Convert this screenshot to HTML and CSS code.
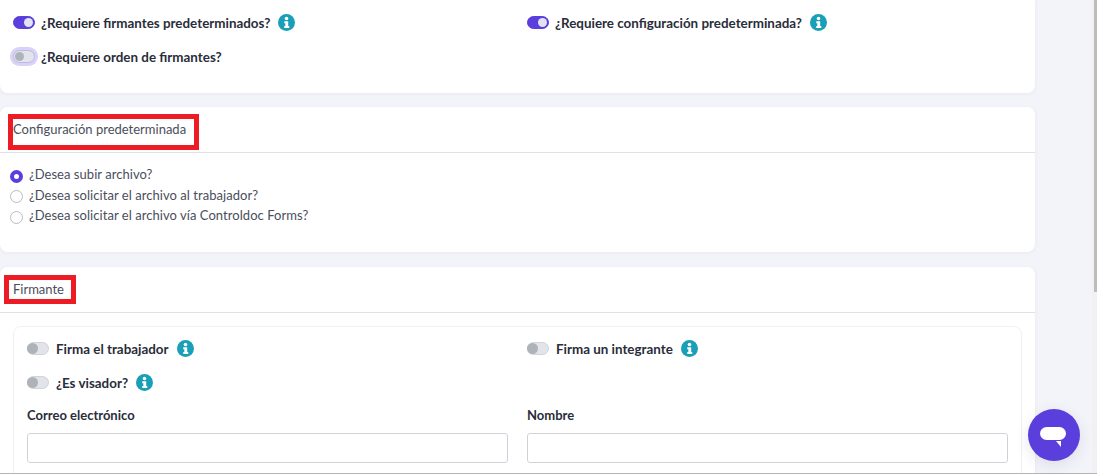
FILE: index.html
```html
<!DOCTYPE html>
<html lang="es">
<head>
<meta charset="utf-8">
<title>Configuración</title>
<link rel="stylesheet" href="styles.css">
</head>
<body>
<main class="page">
  <section class="card card-top">
    <div class="switch-grid">
      <div class="field"><span class="toggle on"></span><span class="label">¿Requiere firmantes predeterminados?</span><svg class="info" viewBox="0 0 16 16"><circle cx="8" cy="8" r="8"/><circle class="glyph" cx="8" cy="4.2" r="1.7"/><path class="glyph" d="M5.9 6.8h3.7v4.6h1v1.8H5.9v-1.8h1V8.6h-1z"/></svg></div>
      <div class="field"><span class="toggle on"></span><span class="label">¿Requiere configuración predeterminada?</span><svg class="info" viewBox="0 0 16 16"><circle cx="8" cy="8" r="8"/><circle class="glyph" cx="8" cy="4.2" r="1.7"/><path class="glyph" d="M5.9 6.8h3.7v4.6h1v1.8H5.9v-1.8h1V8.6h-1z"/></svg></div>
      <div class="field"><span class="toggle focus"></span><span class="label">¿Requiere orden de firmantes?</span></div>
    </div>
  </section>

  <section class="card card-config">
    <header class="card-head"><span class="marked">Configuración predeterminada</span></header>
    <div class="radios">
      <div class="radio-row"><span class="radio checked"></span><span>¿Desea subir archivo?</span></div>
      <div class="radio-row"><span class="radio"></span><span>¿Desea solicitar el archivo al trabajador?</span></div>
      <div class="radio-row"><span class="radio"></span><span>¿Desea solicitar el archivo vía Controldoc Forms?</span></div>
    </div>
  </section>

  <section class="card card-signer">
    <header class="card-head"><span class="marked small">Firmante</span></header>
    <div class="inner">
      <div class="switch-grid inner-switches">
        <div class="field"><span class="toggle"></span><span class="label">Firma el trabajador</span><svg class="info" viewBox="0 0 16 16"><circle cx="8" cy="8" r="8"/><circle class="glyph" cx="8" cy="4.2" r="1.7"/><path class="glyph" d="M5.9 6.8h3.7v4.6h1v1.8H5.9v-1.8h1V8.6h-1z"/></svg></div>
        <div class="field"><span class="toggle"></span><span class="label">Firma un integrante</span><svg class="info" viewBox="0 0 16 16"><circle cx="8" cy="8" r="8"/><circle class="glyph" cx="8" cy="4.2" r="1.7"/><path class="glyph" d="M5.9 6.8h3.7v4.6h1v1.8H5.9v-1.8h1V8.6h-1z"/></svg></div>
        <div class="field"><span class="toggle"></span><span class="label">¿Es visador?</span><svg class="info" viewBox="0 0 16 16"><circle cx="8" cy="8" r="8"/><circle class="glyph" cx="8" cy="4.2" r="1.7"/><path class="glyph" d="M5.9 6.8h3.7v4.6h1v1.8H5.9v-1.8h1V8.6h-1z"/></svg></div>
      </div>
      <div class="input-grid">
        <label class="input-field"><span class="input-label">Correo electrónico</span><span class="input"></span></label>
        <label class="input-field"><span class="input-label">Nombre</span><span class="input"></span></label>
      </div>
    </div>
  </section>
</main>
<div class="scroll-track"><div class="scroll-thumb"></div></div>
<div class="bottom-line"></div>
<button class="chat" aria-label="Chat"><svg viewBox="0 0 52 52" width="52" height="52"><rect x="12" y="18" width="26" height="13" rx="6.5" fill="#fff"/><path d="M28 32h5v6z" fill="#fff"/></svg></button>
</body>
</html>
```

FILE: styles.css
```css
*, *::before, *::after { box-sizing: border-box; }
html, body { margin: 0; height: 100%; }
body {
  height: 474px;
  overflow: hidden;
  background: #f3f4f9;
  font-family: "Lato", "Open Sans", sans-serif;
  font-size: 13px;
  color: #2d3142;
  position: relative;
}
.page {
  width: 1035px;
  display: flex;
  flex-direction: column;
  gap: 14px;
}
.card {
  background: #fff;
  border-radius: 0 0 8px 8px;
  box-shadow: 0 1px 4px rgba(60, 70, 110, .06);
}
.card-top { height: 93px; padding-top: 13px; padding-left: 13px; }
.card-config { height: 145px; border-radius: 8px; }
.card-signer { height: 207px; border-radius: 8px 8px 0 0; margin-top: 1px; overflow: hidden; }
.card-head {
  height: 46px;
  border-bottom: 1px solid #dfe1e4;
  padding-left: 13px;
  display: flex;
  align-items: center;
}
.marked { color: #4a4e5c; font-size: 13px; line-height: 1; position: relative; }
.marked::after {
  content: "";
  position: absolute;
  left: -5px;
  top: -9px;
  width: 191px;
  height: 36px;
  border: 5px solid #ed1c24;
}
.marked.small::after { left: -9px; top: -8px; width: 72px; height: 29px; }
.switch-grid {
  display: grid;
  grid-template-columns: 514px 1fr;
  row-gap: 15px;
}
.inner-switches { grid-template-columns: 500px 1fr; }
.field { display: flex; align-items: center; height: 19px; }
.toggle {
  width: 22px;
  height: 13px;
  border-radius: 7px;
  background: #e2e4e9;
  border: 1px solid #cfd3d9;
  position: relative;
  flex: none;
  margin-right: 6px;
}
.inner-switches .toggle { margin-right: 7px; }
.toggle::after {
  content: "";
  position: absolute;
  left: -1px;
  top: 0;
  width: 11px;
  height: 11px;
  border-radius: 50%;
  background: #aeb3ba;
}
.toggle.on { background: #5a3fdc; border-color: #5a3fdc; }
.toggle.on::after { left: auto; right: 1px; top: 1px; width: 9px; height: 9px; background: #e2e2f2; }
.toggle.focus { box-shadow: 0 0 0 3px #d8d1f8; border-color: #bdb8e6; }
.toggle.focus::after { left: 1px; top: 1px; width: 9px; height: 9px; }
.label { font-weight: 700; font-size: 13.4px; color: #2a2d3a; white-space: nowrap; }
.info { width: 17px; height: 17px; margin-left: 8px; flex: none; }
.info circle { fill: #1a9fb8; }
.info .glyph { fill: #fff; }
.radios { padding: 11px 0 0 10px; display: flex; flex-direction: column; letter-spacing: .05px; }
.radio-row { display: flex; align-items: center; height: 20.5px; color: #4a4e5c; }
.radio {
  width: 13px;
  height: 13px;
  border-radius: 50%;
  border: 1px solid #b9bcc2;
  margin: 4px 6px 0 0;
  flex: none;
}
.radio.checked { border: 4px solid #5a3fdc; }
.inner {
  margin: 13px 13px 0 13px;
  height: 220px;
  border: 1px solid #eff0f2;
  border-radius: 8px;
  padding: 12px 13px 0;
}
.input-grid {
  display: grid;
  grid-template-columns: 481px 481px;
  column-gap: 19px;
  margin-top: 15px;
}
.input-field { display: flex; flex-direction: column; gap: 10px; }
.input-label { font-weight: 700; color: #2a2d3a; }
.input {
  display: block;
  height: 30px;
  border: 1px solid #cfd3d9;
  border-radius: 3px;
  background: #fff;
}
.scroll-track {
  position: absolute;
  top: 0;
  right: 0;
  width: 5px;
  height: 474px;
  background: #f1f1f4;
}
.scroll-thumb {
  width: 3px;
  height: 292px;
  margin-left: 2px;
  background: #bdbdbd;
}
.bottom-line {
  position: absolute;
  left: 0;
  right: 0;
  bottom: 0;
  height: 1px;
  background: #b0b5b8;
}
.chat {
  position: absolute;
  left: 1028px;
  top: 409px;
  width: 52px;
  height: 52px;
  padding: 0;
  border: 0;
  border-radius: 50%;
  background: #5a3fdc;
  box-shadow: 0 4px 14px rgba(60, 60, 120, .12);
}
.chat svg { display: block; }
```
